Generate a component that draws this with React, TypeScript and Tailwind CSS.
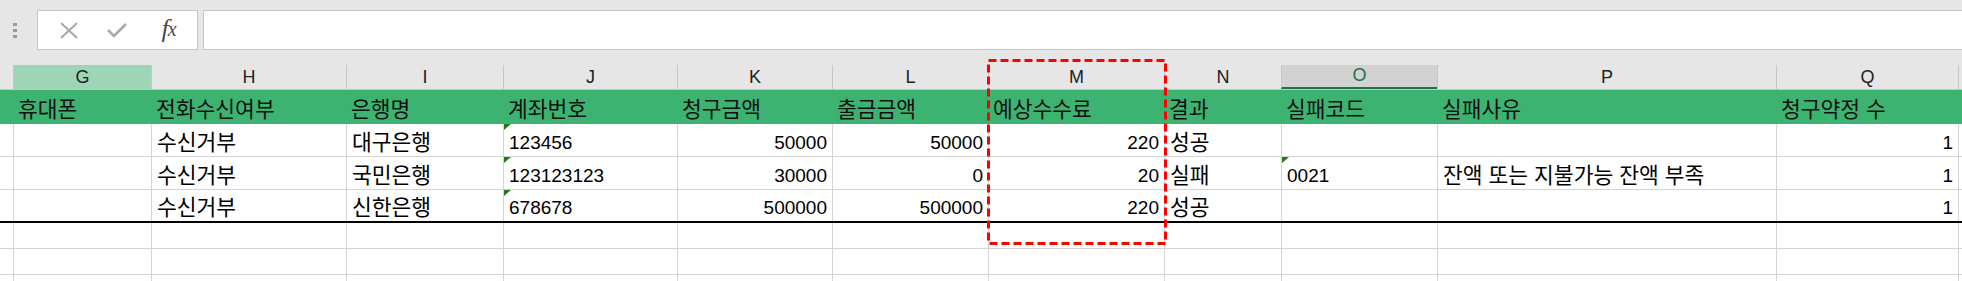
import React from "react";

const letters = ["", "G", "H", "I", "J", "K", "L", "M", "N", "O", "P", "Q", ""];

const titles = [
  "",
  "휴대폰",
  "전화수신여부",
  "은행명",
  "계좌번호",
  "청구금액",
  "출금금액",
  "예상수수료",
  "결과",
  "실패코드",
  "실패사유",
  "청구약정 수",
  "",
];

const rows = [
  ["", "", "수신거부", "대구은행", "123456", "50000", "50000", "220", "성공", "", "", "1", ""],
  ["", "", "수신거부", "국민은행", "123123123", "30000", "0", "20", "실패", "0021", "잔액 또는 지불가능 잔액 부족", "1", ""],
  ["", "", "수신거부", "신한은행", "678678", "500000", "500000", "220", "성공", "", "", "1", ""],
];

// columns where numbers sit on the right
const rightCols = [5, 6, 7, 11];

const gridCols =
  "grid grid-cols-[13px_138px_195px_157px_174px_155px_156px_176px_117px_156px_339px_182px_4px]";

const isKorean = (s: string) => /[가-힣]/.test(s);

function Marker() {
  return (
    <span className="absolute left-0 top-0 w-0 h-0 border-t-[6px] border-t-[#1e7b1e] border-r-[7px] border-r-transparent" />
  );
}

function FormulaBar() {
  return (
    <div className="h-[65px] bg-[#e6e6e6] flex items-start pt-[10px]">
      <div className="w-[37px] h-[40px] flex flex-col items-center justify-center gap-[3px] pr-[8px]">
        <span className="w-[4px] h-[3px] bg-[#9a9a9a]" />
        <span className="w-[4px] h-[3px] bg-[#9a9a9a]" />
        <span className="w-[4px] h-[3px] bg-[#9a9a9a]" />
      </div>
      <div className="w-[161px] h-[40px] bg-white border border-[#c6c6c6] flex items-center">
        <div className="w-[52px] flex justify-center pl-[10px]">
          <svg width="20" height="17" viewBox="0 0 20 17">
            <path d="M2 1 L18 16 M18 1 L2 16" stroke="#a8a8a8" strokeWidth="2" fill="none" />
          </svg>
        </div>
        <div className="w-[54px] flex justify-center">
          <svg width="22" height="16" viewBox="0 0 22 16">
            <path d="M2 8 L8 14 L20 2" stroke="#a8a8a8" strokeWidth="2.6" fill="none" />
          </svg>
        </div>
        <div className="w-[50px] flex justify-center font-['Liberation_Serif',serif] italic text-[#4a4a4a] text-[26px] leading-none pb-[2px]">
          f<span className="text-[20px] -ml-[1px] translate-y-[3px]">x</span>
        </div>
      </div>
      <div className="ml-[5px] flex-1 h-[40px] bg-white border border-[#c6c6c6] border-r-0" />
    </div>
  );
}

function ColumnHeaders() {
  return (
    <div className={`${gridCols} h-[25px] bg-[#e6e6e6] border-b border-[#c6c6c6]`}>
      {letters.map((l, i) => {
        let cls = "";
        if (i === 1) cls = "bg-[#9fd5b7] text-[#222]";
        else if (i === 9) cls = "bg-[#d2d2d2] text-[#217346] border-b-2 border-b-[#217346]";
        else cls = "text-[#222]";
        return (
          <div
            key={i}
            className={`flex items-end justify-center pb-[2px] text-[18px] leading-[20px] ${
              i > 0 ? "border-l border-[#c6c6c6]" : ""
            } ${cls}`}
          >
            {l}
          </div>
        );
      })}
    </div>
  );
}

function TitleRow() {
  return (
    <div className={`${gridCols} h-[34px] bg-[#3cb371]`}>
      {titles.map((t, i) => (
        <div
          key={i}
          className="flex items-end pl-[5px] pb-[3px] text-[21.5px] leading-[22px] text-[#111] whitespace-nowrap"
        >
          {t}
        </div>
      ))}
    </div>
  );
}

function DataRow({ cells, idx }: { cells: string[]; idx: number }) {
  const last = idx === rows.length - 1;
  return (
    <div
      className={`${gridCols} h-[33px] ${
        last ? "border-b-2 border-black" : "border-b border-[#d4d4d4]"
      }`}
    >
      {cells.map((c, i) => {
        const right = rightCols.includes(i);
        const marked = c !== "" && (i === 4 || i === 9);
        return (
          <div
            key={i}
            className={`relative flex items-end pb-[2px] whitespace-nowrap text-black ${
              right ? "justify-end pr-[5px]" : "pl-[5px]"
            } ${i > 0 ? "border-l border-[#d4d4d4]" : ""} ${
              isKorean(c) ? "text-[21.5px] leading-[22px]" : "text-[19px] leading-[22px]"
            }`}
          >
            {marked && <Marker />}
            {c}
          </div>
        );
      })}
    </div>
  );
}

function EmptyRow({ h }: { h: string }) {
  return (
    <div className={`${gridCols} ${h} border-b border-[#d4d4d4]`}>
      {letters.map((_, i) => (
        <div key={i} className={i > 0 ? "border-l border-[#d4d4d4]" : ""} />
      ))}
    </div>
  );
}

export default function App() {
  return (
    <div className="relative w-[1962px] h-[281px] overflow-hidden bg-white font-['Liberation_Sans','Noto_Sans_CJK_KR',sans-serif]">
      <FormulaBar />
      <ColumnHeaders />
      <TitleRow />
      {rows.map((r, i) => (
        <DataRow key={i} cells={r} idx={i} />
      ))}
      <EmptyRow h="h-[26px]" />
      <EmptyRow h="h-[26px]" />
      <EmptyRow h="h-[26px]" />

      {/* highlight around column M */}
      <svg
        className="absolute left-[987px] top-[59px]"
        width="180"
        height="186"
        viewBox="0 0 180 186"
      >
        <rect
          x="1.5"
          y="1.5"
          width="177"
          height="183"
          fill="none"
          stroke="#ff0000"
          strokeWidth="3"
          strokeDasharray="8 4"
        />
      </svg>
    </div>
  );
}
